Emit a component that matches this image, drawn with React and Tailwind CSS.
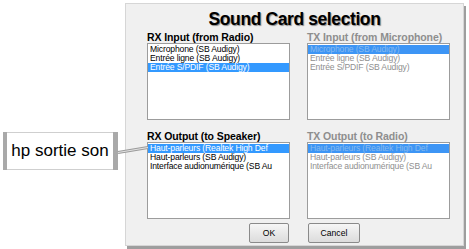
import React from "react";

const rxIn = ["Microphone (SB Audigy)", "Entrée ligne (SB Audigy)", "Entrée S/PDIF (SB Audigy)"];
const rxOut = ["Haut-parleurs (Realtek High Def", "Haut-parleurs (SB Audigy)", "Interface audionumérique (SB Au"];

function ListBox({ label, items, selected, disabled }) {
  return (
    <div className="flex flex-col w-[143px]">
      <p className={`text-[10.5px] font-bold leading-[11px] h-[11px] mb-[0px] tracking-[-0.1px] ${disabled ? "text-[#8e8e8e]" : "text-black"}`}>
        {label}
      </p>
      <div className="h-[77px] bg-white border border-[#9c9c9c] pt-[1px]">
        {items.map((item, i) => {
          const sel = i === selected;
          let cls = disabled ? "text-[#8f8f8f]" : "text-black";
          if (sel) cls = disabled ? "bg-[#3d95f5] text-[#86b9ee]" : "bg-[#3399ff] text-white";
          return (
            <div key={i} className={`h-[9px] leading-[9px] text-[8.6px] pl-[2px] whitespace-nowrap overflow-hidden tracking-[-0.15px] ${cls}`}>
              {item}
            </div>
          );
        })}
      </div>
    </div>
  );
}

function Button({ children, width }) {
  return (
    <button className={`${width} h-[20px] rounded-[2px] border border-[#8a8a8a] bg-gradient-to-b from-[#f6f6f6] to-[#dcdcdc] text-[8.6px] text-black`}>
      {children}
    </button>
  );
}

export default function App() {
  return (
    <div className="relative w-[469px] h-[249px] bg-white overflow-hidden font-['Liberation_Sans',Arial,sans-serif]">
      <div className="flex h-full">
        <div className="w-[125px] pl-[3px] pt-[132px]">
          <div className="flex h-[38px] w-[115px]">
            <div className="w-[4px] bg-[#a9a9a9]" />
            <div className="flex-1 bg-white border-y border-[#cfcfcf] flex items-center justify-center text-[17px] text-black leading-none pb-[2px]">
              hp sortie son
            </div>
            <div className="w-[5px] bg-[#a9a9a9]" />
          </div>
        </div>

        <div className="mt-[3px] w-[339px] h-[243px] bg-[#f0f0f0] border border-[#d6d6d6] shadow-[2px_3px_0_#9e9e9e] flex flex-col">
          <h1 className="text-center text-[17.5px] font-bold leading-[20px] mt-[5px] tracking-[-0.4px] text-black [text-shadow:1px_1px_1px_#8a8a8a]">
            Sound Card selection
          </h1>
          <div className="flex pl-[21px] gap-[17px] mt-[3px]">
            <ListBox label="RX Input (from Radio)" items={rxIn} selected={2} />
            <ListBox label="TX Input (from Microphone)" items={rxIn} selected={0} disabled />
          </div>
          <div className="flex pl-[21px] gap-[17px] mt-[11px]">
            <ListBox label="RX Output (to Speaker)" items={rxOut} selected={0} />
            <ListBox label="TX Output (to Radio)" items={rxOut} selected={0} disabled />
          </div>
          <div className="flex pl-[123px] gap-[19px] mt-[4px]">
            <Button width="w-[40px]">OK</Button>
            <Button width="w-[52px]">Cancel</Button>
          </div>
        </div>
      </div>

      <svg className="absolute left-0 top-0 pointer-events-none" width="469" height="249">
        <line x1="118" y1="152.5" x2="148" y2="147.5" stroke="#9a9a9a" strokeWidth="3" />
        <line x1="118" y1="152.5" x2="148" y2="147.5" stroke="#e2e2e2" strokeWidth="1.2" />
      </svg>
    </div>
  );
}
